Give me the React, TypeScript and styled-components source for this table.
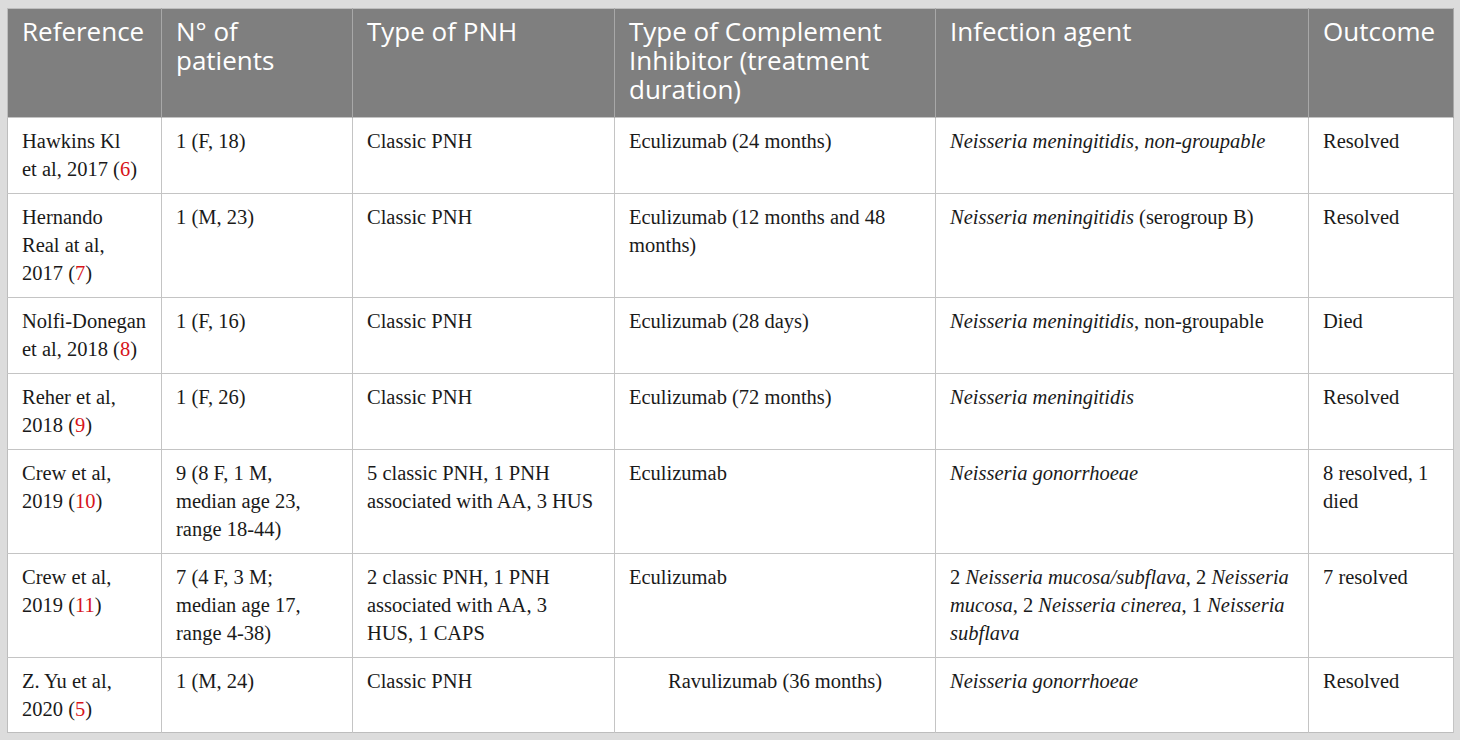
import { FC, ReactNode } from 'react';
import styled, { createGlobalStyle } from 'styled-components';

const GlobalStyle = createGlobalStyle`
  html, body {
    margin: 0;
    padding: 0;
    background: #dcdcdc;
  }
  body {
    padding: 8px 0 0 7px;
  }
`;

const Table = styled.table`
  width: 1446px;
  border-collapse: collapse;
  table-layout: fixed;
  background: #ffffff;
  border: 1px solid #bdbdbd;
`;

const HeadCell = styled.th`
  background: #7f7f7f;
  color: #ffffff;
  font-family: 'Open Sans', 'Liberation Sans', sans-serif;
  font-weight: 400;
  font-size: 26px;
  line-height: 29px;
  text-align: left;
  vertical-align: top;
  padding: 8px 14px 0 14px;
  height: 109px;
  box-sizing: border-box;
  border-right: 1px solid #a8a8a8;
`;

const BodyRow = styled.tr<{ $height: number }>`
  height: ${(p) => p.$height}px;
  border-top: 1px solid #c4c4c4;
`;

// 열마다 오른쪽 여백이 조금씩 달라서 prop 으로 받음
const Cell = styled.td<{ $center?: boolean; $pr: number }>`
  font-family: 'Liberation Serif', 'Times New Roman', serif;
  font-size: 20.5px;
  line-height: 28px;
  color: #1a1a1a;
  vertical-align: top;
  padding: 9px ${(p) => p.$pr}px 0 14px;
  box-sizing: border-box;
  border-right: 1px solid #c4c4c4;
  text-align: ${(p) => (p.$center ? 'center' : 'left')};
`;

const Cite = styled.span`
  color: #d7141a;
`;

type Row = {
  height: number;
  ref: ReactNode;
  patients: ReactNode;
  type: ReactNode;
  inhibitor: ReactNode;
  centerInhibitor?: boolean;
  agent: ReactNode;
  outcome: ReactNode;
};

const rows: Row[] = [
  {
    height: 76,
    ref: (
      <>
        Hawkins Kl
        <br />
        et al, 2017 (<Cite>6</Cite>)
      </>
    ),
    patients: '1 (F, 18)',
    type: 'Classic PNH',
    inhibitor: 'Eculizumab (24 months)',
    agent: <i>Neisseria meningitidis, non-groupable</i>,
    outcome: 'Resolved',
  },
  {
    height: 104,
    ref: (
      <>
        Hernando
        <br />
        Real at al, 2017 (<Cite>7</Cite>)
      </>
    ),
    patients: '1 (M, 23)',
    type: 'Classic PNH',
    inhibitor: 'Eculizumab (12 months and 48 months)',
    agent: <><i>Neisseria meningitidis</i> (serogroup B)</>,
    outcome: 'Resolved',
  },
  {
    height: 76,
    ref: <>Nolfi-Donegan et al, 2018 (<Cite>8</Cite>)</>,
    patients: '1 (F, 16)',
    type: 'Classic PNH',
    inhibitor: 'Eculizumab (28 days)',
    agent: <><i>Neisseria meningitidis</i>, non-groupable</>,
    outcome: 'Died',
  },
  {
    height: 76,
    ref: <>Reher et al, 2018 (<Cite>9</Cite>)</>,
    patients: '1 (F, 26)',
    type: 'Classic PNH',
    inhibitor: 'Eculizumab (72 months)',
    agent: <i>Neisseria meningitidis</i>,
    outcome: 'Resolved',
  },
  {
    height: 104,
    ref: <>Crew et al, 2019 (<Cite>10</Cite>)</>,
    patients: '9 (8 F, 1 M, median age 23, range 18-44)',
    type: '5 classic PNH, 1 PNH associated with AA, 3 HUS',
    inhibitor: 'Eculizumab',
    agent: <i>Neisseria gonorrhoeae</i>,
    outcome: '8 resolved, 1 died',
  },
  {
    height: 104,
    ref: <>Crew et al, 2019 (<Cite>11</Cite>)</>,
    patients: '7 (4 F, 3 M; median age 17, range 4-38)',
    type: '2 classic PNH, 1 PNH associated with AA, 3 HUS, 1 CAPS',
    inhibitor: 'Eculizumab',
    agent: (
      <>
        2 <i>Neisseria mucosa/subflava</i>, 2 <i>Neisseria mucosa</i>, 2 <i>Neisseria cinerea</i>, 1{' '}
        <i>Neisseria subflava</i>
      </>
    ),
    outcome: '7 resolved',
  },
  {
    height: 75,
    ref: <>Z. Yu et al, 2020 (<Cite>5</Cite>)</>,
    patients: '1 (M, 24)',
    type: 'Classic PNH',
    inhibitor: 'Ravulizumab (36 months)',
    centerInhibitor: true,
    agent: <i>Neisseria gonorrhoeae</i>,
    outcome: 'Resolved',
  },
];

const columns = [
  { width: 154, pr: 14 },
  { width: 191, pr: 18 },
  { width: 262, pr: 18 },
  { width: 321, pr: 14 },
  { width: 373, pr: 14 },
  { width: 145, pr: 14 },
];

const App: FC = () => {
  return (
    <>
      <GlobalStyle />
      <Table>
        <colgroup>
          {columns.map((c, i) => (
            <col key={i} style={{ width: c.width }} />
          ))}
        </colgroup>
        <thead>
          <tr>
            <HeadCell>Reference</HeadCell>
            <HeadCell>N° of patients</HeadCell>
            <HeadCell>Type of PNH</HeadCell>
            <HeadCell>Type of Complement Inhibitor (treatment duration)</HeadCell>
            <HeadCell>Infection agent</HeadCell>
            <HeadCell>Outcome</HeadCell>
          </tr>
        </thead>
        <tbody>
          {rows.map((r, i) => (
            <BodyRow key={i} $height={r.height}>
              <Cell $pr={columns[0].pr}>{r.ref}</Cell>
              <Cell $pr={columns[1].pr}>{r.patients}</Cell>
              <Cell $pr={columns[2].pr}>{r.type}</Cell>
              <Cell $pr={columns[3].pr} $center={r.centerInhibitor}>
                {r.inhibitor}
              </Cell>
              <Cell $pr={columns[4].pr}>{r.agent}</Cell>
              <Cell $pr={columns[5].pr}>{r.outcome}</Cell>
            </BodyRow>
          ))}
        </tbody>
      </Table>
    </>
  );
};

export default App;
